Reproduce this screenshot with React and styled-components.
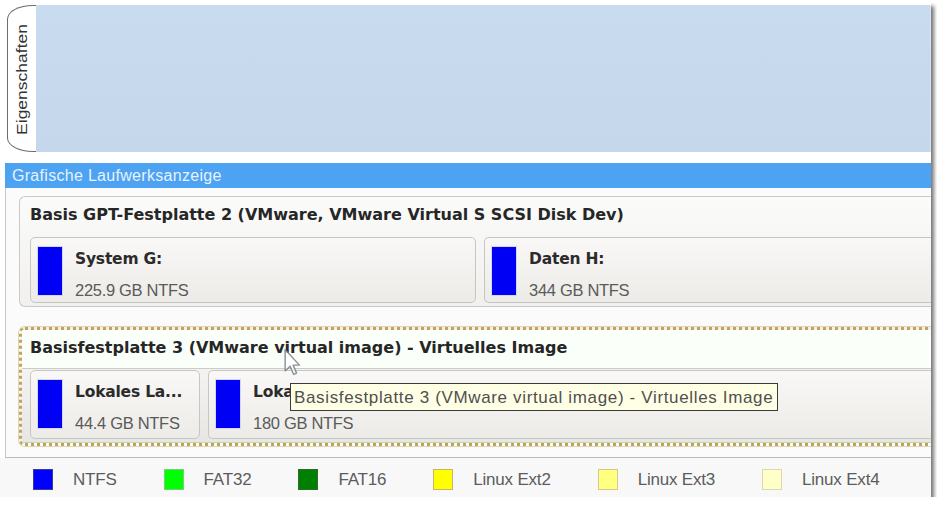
import React from 'react';
import styled, { createGlobalStyle } from 'styled-components';

const GlobalStyle = createGlobalStyle`
    html, body {
        margin:0;
        padding:0;
        background:#ffffff;
        font-family:"Liberation Sans", Arial, sans-serif;
        overflow:hidden;
    }
`;

const disks = [
    {
        title: 'Basis GPT-Festplatte 2 (VMware, VMware Virtual S SCSI Disk Dev)',
        selected: false,
        parts: [
            { name: 'System G:', size: '225.9 GB NTFS', width: 446 },
            { name: 'Daten H:', size: '344 GB NTFS', width: 0 },
        ],
    },
    {
        title: 'Basisfestplatte 3 (VMware virtual image) - Virtuelles Image',
        selected: true,
        parts: [
            { name: 'Lokales La...', size: '44.4 GB NTFS', width: 170 },
            { name: 'Loka', size: '180 GB NTFS', width: 0 },
        ],
    },
];

const legend = [
    { label: 'NTFS', fill: '#0000ff', edge: '#3a3a9a' },
    { label: 'FAT32', fill: '#00ff00', edge: '#7acb7a' },
    { label: 'FAT16', fill: '#008000', edge: '#2f6a2f' },
    { label: 'Linux Ext2', fill: '#ffff00', edge: '#c9b56a' },
    { label: 'Linux Ext3', fill: '#ffff80', edge: '#d4c98c' },
    { label: 'Linux Ext4', fill: '#ffffc8', edge: '#dcd6b0' },
];

function Cursor() {
    return (
        <CursorWrap>
            <svg width="20" height="30" viewBox="0 0 13 21">
                <path d="M1 1 L1 16 L4.5 12.8 L7 18.5 L9 17.6 L6.6 12 L11 12 Z"
                    fill="#ffffff" stroke="#7a7f88" strokeWidth="1" strokeLinejoin="round" />
            </svg>
        </CursorWrap>
    );
}

function App() {
    return (
        <>
            <GlobalStyle />
            <Frame>
                <TopArea>
                    <Tab><TabText>Eigenschaften</TabText></Tab>
                    <Properties />
                </TopArea>
                <TitleBar>Grafische Laufwerksanzeige</TitleBar>
                <Content>
                    {disks.map((d) => (
                        <DiskGroup key={d.title} $selected={d.selected}>
                            <DiskHeader $selected={d.selected}>{d.title}</DiskHeader>
                            <PartRow $selected={d.selected}>
                                {d.parts.map((p) => (
                                    <Partition key={p.name} style={p.width ? { width: p.width } : undefined}
                                        $grow={!p.width} $tall={d.selected}>
                                        <Swatch />
                                        <PartText>
                                            <PartName>{p.name}</PartName>
                                            <PartSize>{p.size}</PartSize>
                                        </PartText>
                                    </Partition>
                                ))}
                            </PartRow>
                        </DiskGroup>
                    ))}
                    <Cursor />
                    <Tooltip>Basisfestplatte 3 (VMware virtual image) - Virtuelles Image</Tooltip>
                </Content>
                <Legend>
                    {legend.map((l) => (
                        <LegendItem key={l.label}>
                            <LegendSwatch $fill={l.fill} $edge={l.edge} />
                            <LegendLabel>{l.label}</LegendLabel>
                        </LegendItem>
                    ))}
                </Legend>
            </Frame>
        </>
    );
}

const Frame = styled.div`
    width:931px;
    height:492px;
    padding-top:5px;
    background:#ffffff;
    display:flex;
    flex-direction:column;
    box-shadow:3px 6px 4px rgba(70,70,70,.75);
    overflow:hidden;
`;
const TopArea = styled.div`
    height:147px;
    flex:none;
    display:flex;
    padding-left:7px;
`;
const Tab = styled.div`
    width:29px;
    background:#ffffff;
    border:1px solid #6d6d6d;
    border-right:none;
    border-top-left-radius:26px 14px;
    border-bottom-left-radius:26px 14px;
    display:flex;
    align-items:flex-start;
    justify-content:center;
    padding-top:18px;
    box-sizing:border-box;
`;
const TabText = styled.span`
    writing-mode:vertical-rl;
    font-size:17.5px;
    color:#333;
    transform:rotate(180deg) scaleX(.8);
`;
const Properties = styled.div`
    flex:1;
    background:linear-gradient(#c9dbee, #c5d7ea);
    border-right:1px solid #d9e2ec;
`;
const TitleBar = styled.div`
    flex:none;
    margin-top:11px;
    margin-left:5px;
    height:25px;
    line-height:25px;
    padding-left:7px;
    background:#4da3f2;
    color:#e6f2ff;
    font-size:16px;
    letter-spacing:.3px;
`;
const Content = styled.div`
    position:relative;
    flex:1;
    margin-left:5px;
    border-left:1px solid #c8c8c8;
    border-bottom:1px solid #b9b9b9;
    background:#fbfbfb;
    padding:8px 0 0 13px;
    display:flex;
    flex-direction:column;
    gap:20px;
    overflow:hidden;
`;
const DiskGroup = styled.div`
    margin-right:-6px;
    border-radius:6px 0 0 6px;
    border:${(p) => (p.$selected ? '3px dotted #c2a35d' : '1px solid #c9c9c9')};
    border-right:none;
    background:linear-gradient(#fbfbfa, #f1f0ed);
    display:flex;
    flex-direction:column;
    box-shadow:${(p) => (p.$selected ? '0 0 0 1px #e2d6b0' : 'none')};
`;
const DiskHeader = styled.div`
    font-family:"DejaVu Sans", Verdana, sans-serif;
    font-weight:bold;
    font-size:16px;
    line-height:19px;
    color:#262626;
    padding:${(p) => (p.$selected ? '8px 0 11px 8px' : '8px 0 13px 10px')};
    background:${(p) => (p.$selected ? '#fbfffa' : 'transparent')};
    border-bottom:${(p) => (p.$selected ? '1px solid #c9cdc9' : 'none')};
    white-space:nowrap;
`;
const PartRow = styled.div`
    display:flex;
    gap:8px;
    padding:${(p) => (p.$selected ? '1px 0 3px 8px' : '0 0 3px 10px')};
    background:${(p) => (p.$selected ? 'linear-gradient(#f4f3f1, #e7e6e3)' : 'transparent')};
    border-bottom:${(p) => (p.$selected ? '1px solid #bcd8b4' : 'none')};
`;
const Partition = styled.div`
    flex:${(p) => (p.$grow ? '1' : 'none')};
    height:${(p) => (p.$tall ? '69px' : '66px')};
    box-sizing:border-box;
    border:1px solid #c6c6c4;
    border-right:${(p) => (p.$grow ? 'none' : '1px solid #c6c6c4')};
    border-radius:5px;
    background:linear-gradient(#f9f8f6, #ecebe8);
    display:flex;
    align-items:flex-start;
    padding:9px 0 0 7px;
    gap:13px;
    overflow:hidden;
`;
const Swatch = styled.div`
    width:24px;
    height:48px;
    flex:none;
    background:#0000f5;
    box-shadow:0 0 0 1px #d6d6f0;
`;
const PartText = styled.div`
    display:flex;
    flex-direction:column;
    white-space:nowrap;
`;
const PartName = styled.div`
    font-family:"DejaVu Sans", Verdana, sans-serif;
    font-weight:bold;
    font-size:15.5px;
    line-height:19px;
    color:#2b2b2b;
    margin-top:3px;
    letter-spacing:-.2px;
`;
const PartSize = styled.div`
    font-size:16.5px;
    line-height:19px;
    color:#5a5a5a;
    margin-top:12px;
    letter-spacing:-.3px;
`;
const CursorWrap = styled.div`
    position:absolute;
    left:277px;
    top:160px;
    opacity:.85;
`;
const Tooltip = styled.div`
    position:absolute;
    left:284px;
    top:195px;
    height:28px;
    line-height:28px;
    padding:0 4px 0 3px;
    background:#ffffe6;
    border:1px solid #3b3b3b;
    font-size:17px;
    color:#505050;
    white-space:nowrap;
    letter-spacing:.65px;
    box-sizing:border-box;
`;
const Legend = styled.div`
    height:39px;
    flex:none;
    display:flex;
    align-items:center;
    padding:4px 0 0 33px;
    box-sizing:border-box;
    gap:47px;
    background:#f8f8f8;
`;
const LegendItem = styled.div`
    display:flex;
    align-items:center;
    gap:20px;
`;
const LegendSwatch = styled.div`
    width:18px;
    height:19px;
    background:${(p) => p.$fill};
    border:1px solid ${(p) => p.$edge};
`;
const LegendLabel = styled.span`
    font-size:17px;
    color:#5c5c5c;
    letter-spacing:-.2px;
`;

export default App;
